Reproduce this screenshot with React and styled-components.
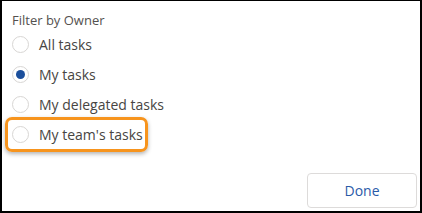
import React, { useState } from "react";
import styled, { createGlobalStyle } from "styled-components";

const Global = createGlobalStyle`
  html, body { margin: 0; padding: 0; background: #fff; }
  *, *::before, *::after { box-sizing: border-box; }
`;

const Frame = styled.div`
  width: 422px;
  height: 213px;
  border: 2px solid #000;
  border-top-width: 1px;
  display: flex;
  flex-direction: column;
  padding: 11px 3px 3px 10px;
  font-family: "Open Sans", "Liberation Sans", sans-serif;
  color: #3e3e3c;
  background: #fff;
`;

const Legend = styled.div`
  font-size: 13px;
  line-height: 17px;
  color: #54514f;
`;

const List = styled.div`
  display: flex;
  flex-direction: column;
`;

const Row = styled.label`
  position: relative;
  display: flex;
  align-items: center;
  gap: 10px;
  height: 30px;
  font-size: 14px;
  color: #474543;
  cursor: pointer;

  ${(p) =>
    p.$highlight &&
    `
    &::after {
      content: "";
      position: absolute;
      left: -7px;
      top: -2px;
      width: 143px;
      height: 35px;
      border: 3px solid #f7941d;
      border-radius: 7px;
      box-shadow: 0 2px 4px rgba(0, 0, 0, 0.3);
      pointer-events: none;
    }
  `}
`;

const Circle = styled.span`
  width: 17px;
  height: 17px;
  border-radius: 50%;
  border: 1px solid #d8d6d4;
  background: #fff;
  display: flex;
  align-items: center;
  justify-content: center;
  flex: none;

  &::before {
    content: "";
    width: 9px;
    height: 9px;
    border-radius: 50%;
    background: ${(p) => (p.$checked ? "#1b4f9c" : "transparent")};
  }
`;

const Footer = styled.div`
  margin-top: auto;
  display: flex;
  justify-content: flex-end;
`;

const Button = styled.button`
  width: 110px;
  height: 35px;
  border: 1px solid #dddbda;
  border-radius: 4px;
  background: #fff;
  color: #2a5aa8;
  font-family: "Open Sans", "Liberation Sans", sans-serif;
  font-size: 14px;
  cursor: pointer;
`;

const options = ["All tasks", "My tasks", "My delegated tasks", "My team's tasks"];

export default function App() {
  const [selected, setSelected] = useState(1);
  return (
    <>
      <Global />
      <Frame>
        <Legend>Filter by Owner</Legend>
        <List>
          {options.map((o, i) => (
            <Row key={o} $highlight={i === 3} onClick={() => setSelected(i)}>
              <Circle $checked={selected === i} />
              {o}
            </Row>
          ))}
        </List>
        <Footer>
          <Button>Done</Button>
        </Footer>
      </Frame>
    </>
  );
}
